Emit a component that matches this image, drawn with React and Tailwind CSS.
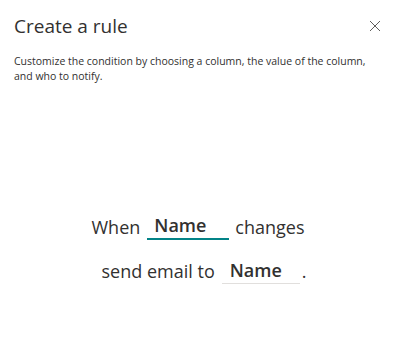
export default function App() {
  return (
    <div className="w-[400px] h-[353px] bg-white text-[#323130] font-['Open_Sans',sans-serif] flex flex-col">
      <div className="flex items-center justify-between pl-[14px] pr-[19px] pt-[12px]">
        <h1 className="text-[19px] leading-[28px] font-normal text-[#323130]">Create a rule</h1>
        <svg className="w-[12px] h-[12px] text-[#605e5c]" viewBox="0 0 12 12" fill="none" stroke="currentColor" strokeWidth="1">
          <path d="M1 1L11 11M11 1L1 11" />
        </svg>
      </div>
      <p className="px-[14px] pr-[20px] mt-[14px] text-[10.5px] leading-[15px] text-[#323130]">
        Customize the condition by choosing a column, the value of the column, and who to notify.
      </p>
      <div className="flex flex-col items-center mt-[128px] text-[18px] leading-[26px]">
        <div className="flex items-end pr-[4px]">
          <span>When</span>
          <span className="ml-[7px] w-[82px] border-b-2 border-[#038387] pl-[7px] font-semibold">Name</span>
          <span className="ml-[6px]">changes</span>
        </div>
        <div className="flex items-end mt-[17px] pl-[8px]">
          <span>send email to</span>
          <span className="ml-[7px] w-[78px] border-b border-[#e1dfdd] pl-[8px] font-semibold">Name</span>
          <span className="ml-[2px]">.</span>
        </div>
      </div>
    </div>
  )
}
